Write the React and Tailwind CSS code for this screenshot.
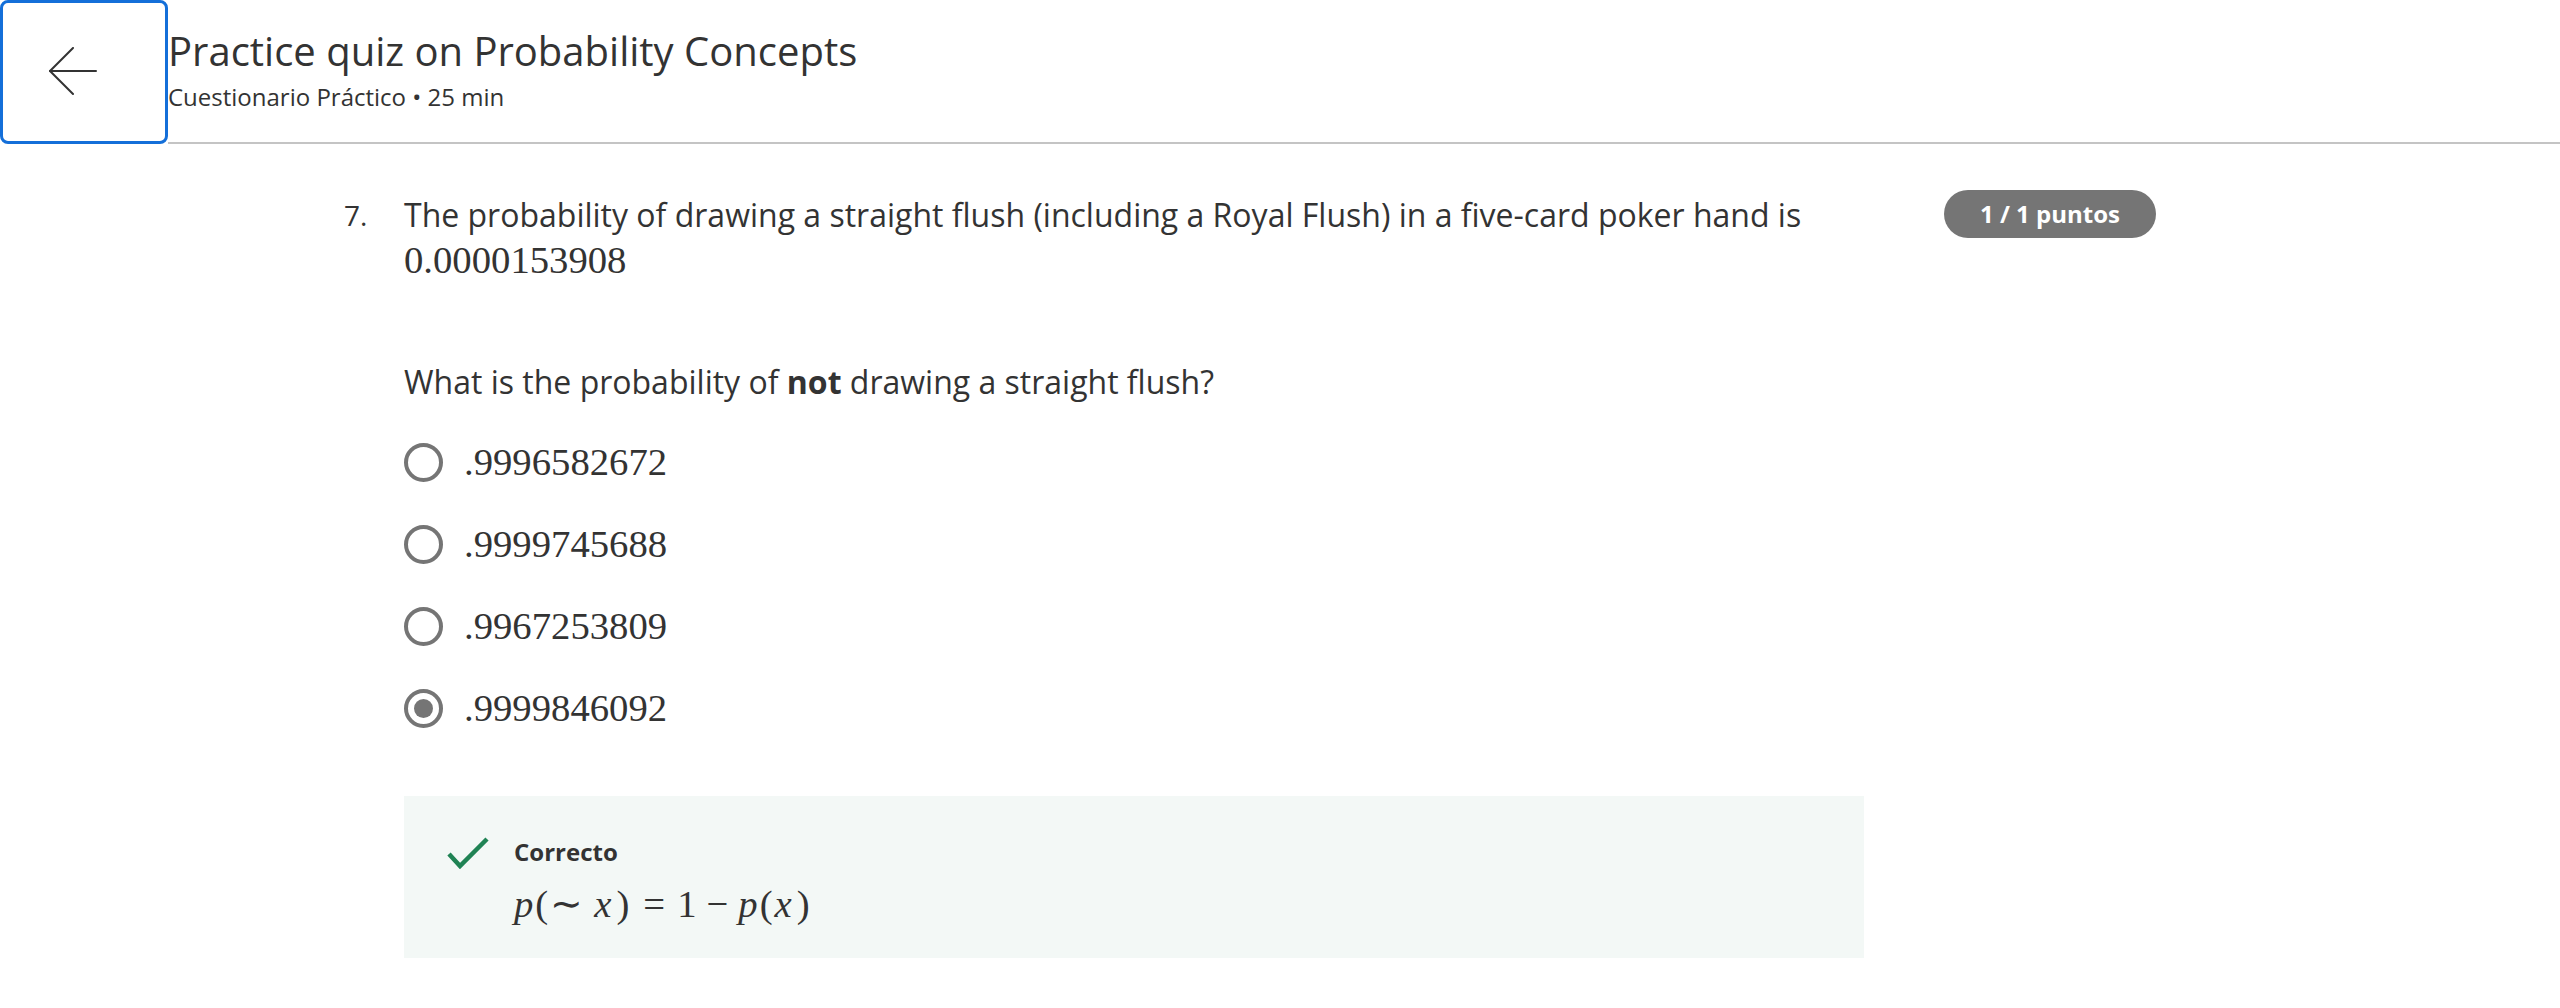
const sans = { fontFamily: '"Open Sans", "Liberation Sans", sans-serif' }

function BackArrow() {
  return (
    <svg width="50" height="50" viewBox="0 0 50 50" fill="none" stroke="#333333" strokeWidth="2" strokeLinecap="round" strokeLinejoin="round">
      <path d="M48 24H2" />
      <path d="M25 1L2 24l23 23" />
    </svg>
  )
}

function Radio({ checked }) {
  return (
    <span className="flex h-[39px] w-[39px] shrink-0 items-center justify-center rounded-full border-[4px] border-[#757575]">
      {checked && <span className="h-[19px] w-[19px] rounded-full bg-[#757575]" />}
    </span>
  )
}

function Math({ children, className = '' }) {
  return (
    <span className={`font-['Liberation_Serif',serif] text-[38.7px] text-[#333333] ${className}`}>{children}</span>
  )
}

const options = [
  { value: '.9996582672', checked: false },
  { value: '.9999745688', checked: false },
  { value: '.9967253809', checked: false },
  { value: '.9999846092', checked: true },
]

export default function App() {
  return (
    <div className="min-h-[1008px] w-[2560px] bg-white text-[#333333]" style={sans}>
      <header className="flex h-[144px]">
        <button
          type="button"
          className="flex h-[144px] w-[168px] shrink-0 items-center justify-center rounded-lg border-[3px] border-[#146fd9] bg-white pr-[22px]"
        >
          <BackArrow />
        </button>
        <div className="flex-1 border-b-2 border-[#c4c4c4] pt-[25px]">
          <h1 className="text-[40px] leading-[52px] font-normal">Practice quiz on Probability Concepts</h1>
          <p className="mt-[4px] text-[24px] leading-[32px]">Cuestionario Práctico • 25 min</p>
        </div>
      </header>

      <main className="flex pt-[47px] pl-[344px]">
        <div className="w-[60px] shrink-0 text-[28px] leading-[48px]">7.</div>

        <div className="w-[1460px] shrink-0">
          <div className="text-[32px] leading-[48px]">
            The probability of drawing a straight flush (including a Royal Flush) in a five-card poker hand is
          </div>
          <div className="-mt-[3px] leading-[48px]">
            <Math>0.0000153908</Math>
          </div>

          <p className="mt-[67px] text-[32px] leading-[48px]">
            What is the probability of <strong className="font-bold">not</strong> drawing a straight flush?
          </p>

          <div className="mt-[36px] flex flex-col gap-[42px]">
            {options.map((o) => (
              <label key={o.value} className="flex h-[40px] items-center gap-[21px]">
                <Radio checked={o.checked} />
                <Math className="leading-[40px]">{o.value}</Math>
              </label>
            ))}
          </div>

          <div className="mt-[68px] h-[162px] bg-[#f3f8f6] pt-[40px] pl-[43px]">
            <div className="flex items-start gap-[25px]">
              <svg width="42" height="32" viewBox="0 0 42 32" fill="none" className="mt-[1px] shrink-0">
                <path d="M2 17l11 12L40 2" stroke="#1f8354" strokeWidth="4.5" />
              </svg>
              <div>
                <div className="text-[24px] leading-[32px] font-bold">Correcto</div>
                <div className="mt-[14px] leading-[44px]">
                  <Math>
                    <i>p</i>
                    <span className="px-[2px]">(</span>∼<span className="ml-[11px]" />
                    <i className="pr-[3px]">x</i>
                    <span className="px-[2px]">)</span>
                    <span className="mx-[12px]">=</span>1<span className="mx-[10px]">−</span>
                    <i>p</i>
                    <span className="px-[2px]">(</span>
                    <i className="pr-[3px]">x</i>
                    <span className="px-[2px]">)</span>
                  </Math>
                </div>
              </div>
            </div>
          </div>
        </div>

        <div className="ml-[80px] mt-[-1px] flex h-[48px] w-[212px] items-center justify-center rounded-full bg-[#757575] text-[24px] font-bold text-white">
          1 / 1 puntos
        </div>
      </main>
    </div>
  )
}
